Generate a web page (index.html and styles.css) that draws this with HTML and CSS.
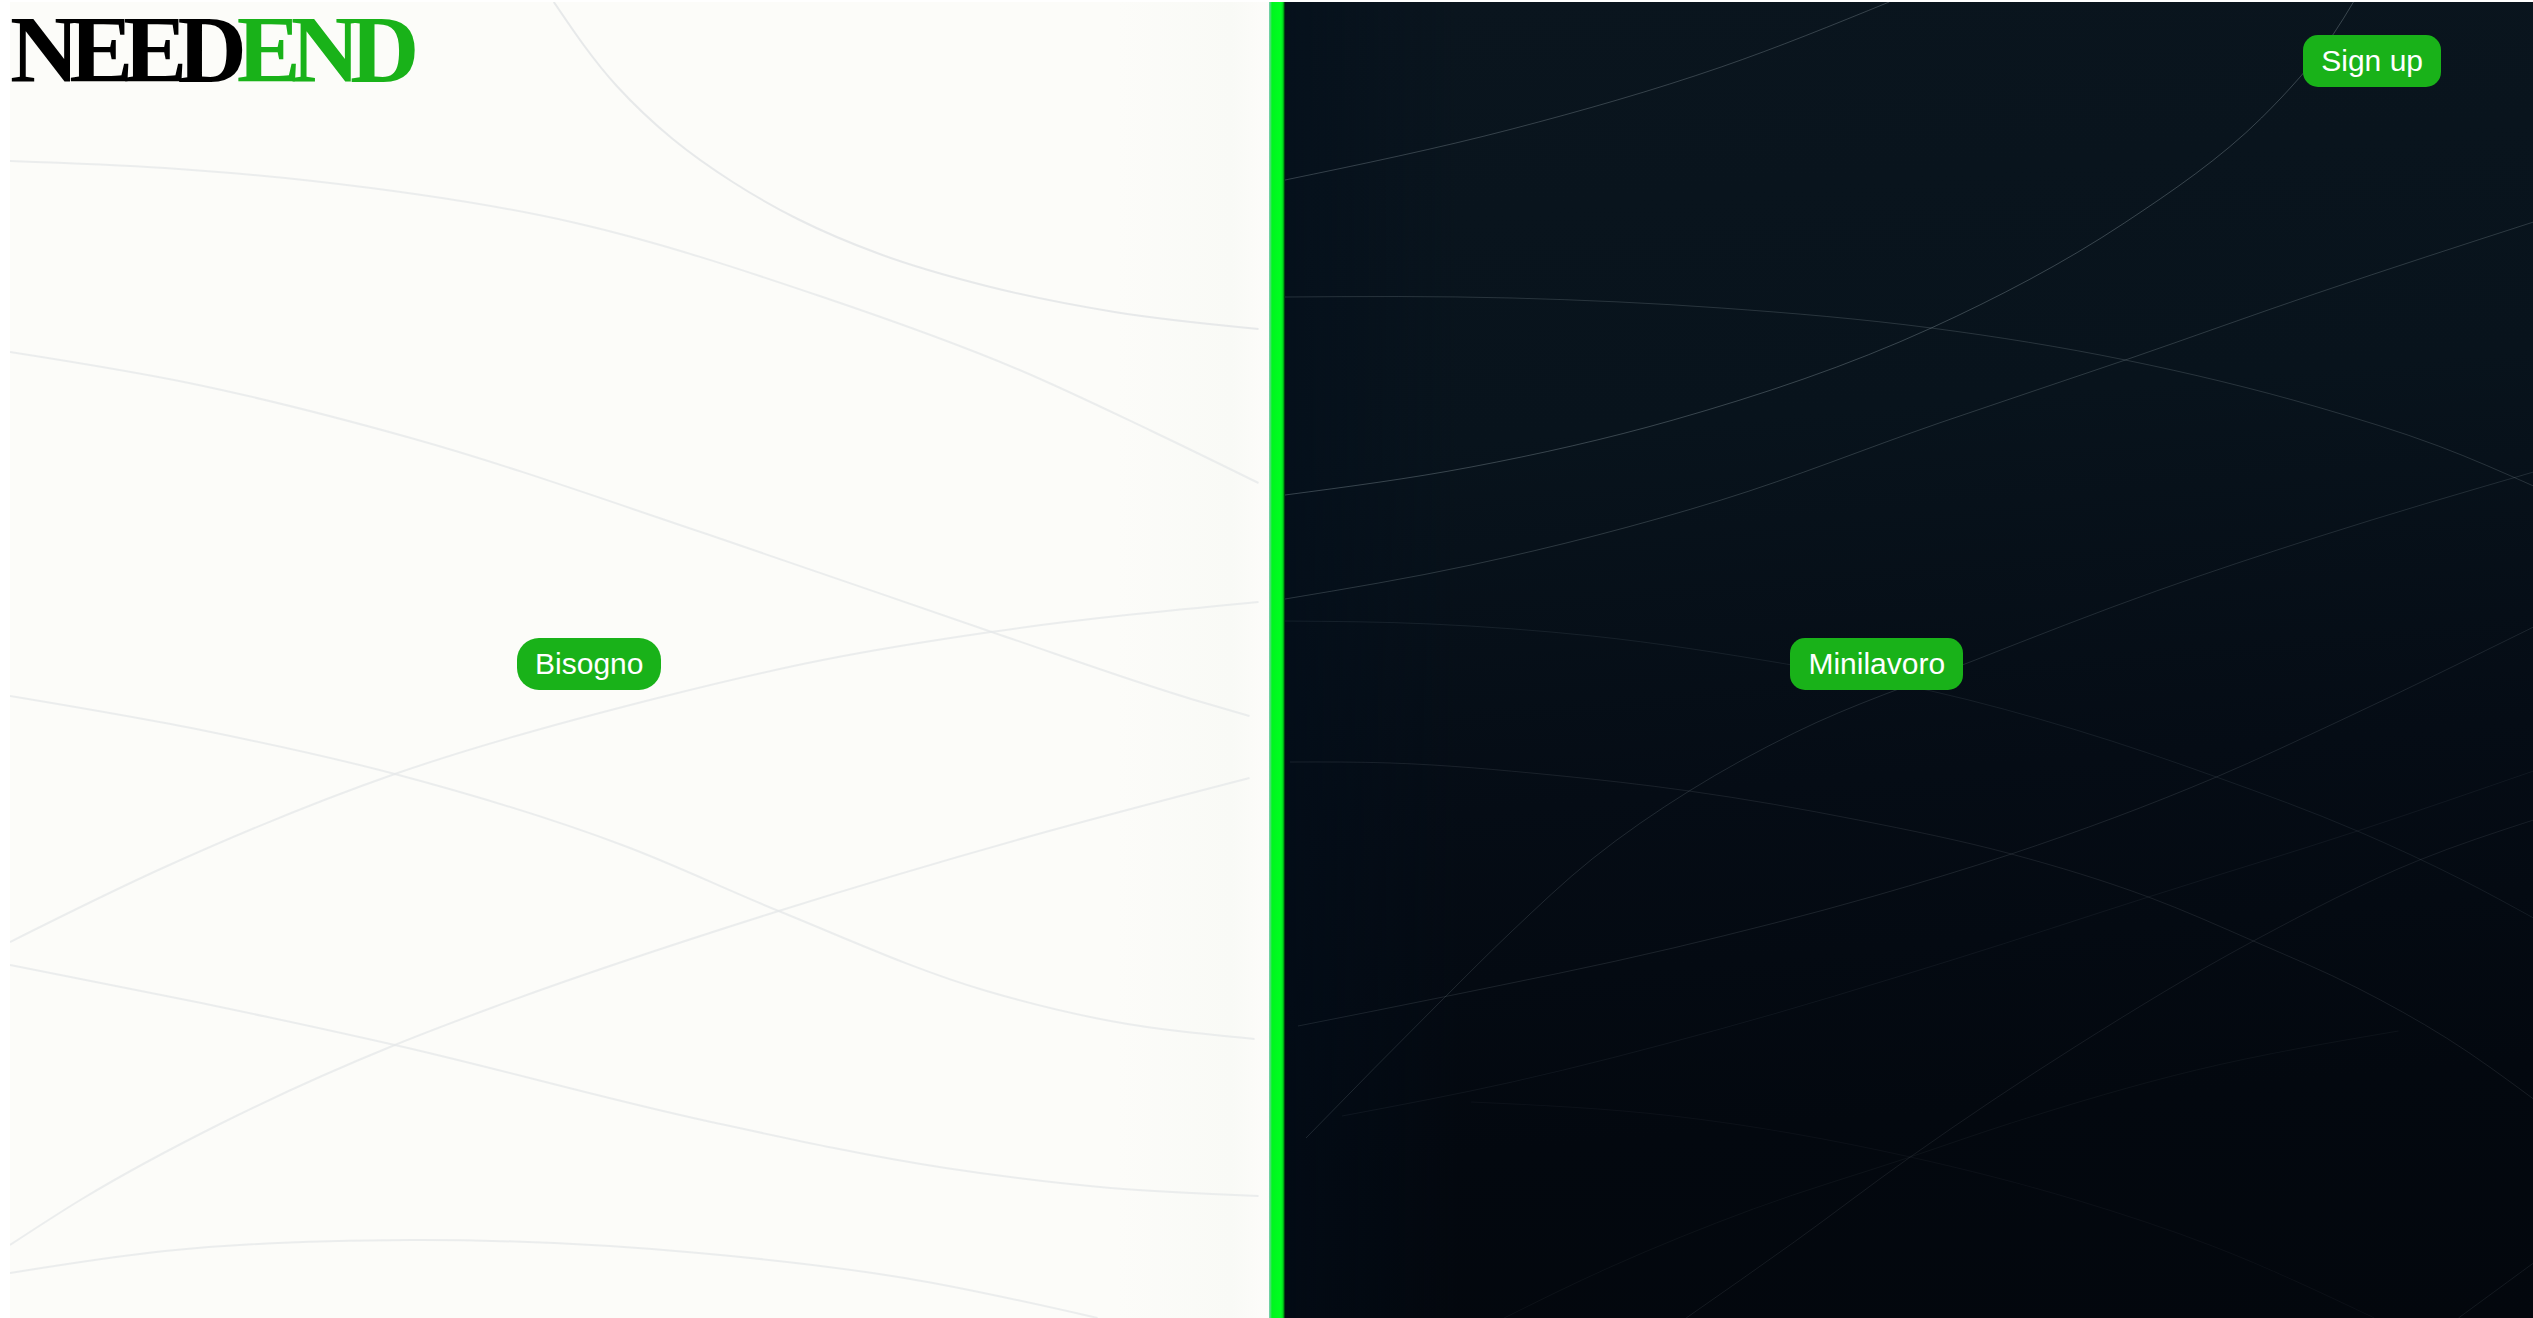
FILE: index.html
```html
<!DOCTYPE html>
<html lang="it">
<head>
<meta charset="utf-8">
<title>NEEDEND</title>
<link rel="stylesheet" href="styles.css">
</head>
<body>
<main class="split">
  <section class="panel panel-light">
    <svg class="waves" id="waves-light" viewBox="10 2 1259 1316" preserveAspectRatio="none" aria-hidden="true"></svg>
    <h1 class="logo">NEED<span class="logo-accent">END</span></h1>
    <button class="btn btn-need" type="button">Bisogno</button>
  </section>
  <div class="divider"></div>
  <section class="panel panel-dark">
    <svg class="waves" id="waves-dark" viewBox="1285 2 1248 1316" preserveAspectRatio="none" aria-hidden="true"></svg>
    <button class="btn btn-signup" type="button">Sign up</button>
    <button class="btn btn-job" type="button">Minilavoro</button>
  </section>
</main>
<script src="waves.js"></script>
</body>
</html>
```
FILE: styles.css
```css
* {
  box-sizing: border-box;
}

body {
  margin: 0;
  padding: 2px 0 0 10px;
  background: #fff;
  font-family: "Liberation Sans", Arial, sans-serif;
}

.split {
  display: grid;
  grid-template-columns: calc(50vw - 8px) 16px 1fr;
  min-height: calc(100vh - 2px);
}

.panel {
  display: grid;
  grid-template: minmax(0, 1fr) / minmax(0, 1fr);
}

/* Artwork, logo and buttons share one cell and are aligned inside it */
.panel > * {
  grid-area: 1 / 1;
}

.panel-light {
  background: linear-gradient(90deg, #fcfcf9 0%, #fcfcf9 88%, #f9faf6 97%, #fdfcfa 100%);
}

.panel-dark {
  background:
    linear-gradient(90deg, #020d1a88 0%, #020d1a00 14%),
    linear-gradient(175deg, #0a151e 0%, #08131c 32%, #050c15 58%, #03080f 82%, #03070d 100%);
}

.divider {
  background: linear-gradient(90deg, #86c9bd 0, #00f51f 3px, #00ff20 12px, #00d81b 14px, #001a08 100%);
}

.waves {
  width: 100%;
  height: 100%;
  min-height: 0;
  contain: size;
}

.waves path {
  fill: none;
  vector-effect: non-scaling-stroke;
}

#waves-light path {
  stroke: #e4e7e8;
  stroke-width: 2px;
}

#waves-dark path {
  stroke: #a9b8c0;
  stroke-width: 1px;
}

.logo {
  align-self: start;
  justify-self: start;
  margin: 0;
  font-family: "Liberation Serif", "Times New Roman", serif;
  font-size: 96px;
  font-weight: 700;
  line-height: 96px;
  letter-spacing: -10px;
  color: #000;
}

.logo-accent {
  color: #19b219;
}

.btn {
  border: 0;
  border-radius: 15px;
  padding: 9px 18px;
  background: #19b219;
  color: #fff;
  font-family: inherit;
  font-size: 30px;
  line-height: 34px;
  cursor: pointer;
}

.btn-need,
.btn-job {
  place-self: center;
  margin-top: 8px;
}

.btn-need {
  margin-right: 100px;
  border-radius: 22px;
}

.btn-job {
  margin-right: 64px;
}

.btn-signup {
  place-self: start end;
  margin: 33px 92px 0 0;
}
```
FILE: waves.js
```js
// Each wave: stroke opacity, then the points its curve runs through.
const light = [
  [.9, 554,2, 617,86, 673,139, 733,182, 798,219, 880,254, 987,286, 1115,312, 1259,329],
  [.7, 10,161, 165,168, 313,181, 576,223, 823,297, 1020,370, 1152,431, 1259,483],
  [.7, 10,352, 189,383, 411,438, 707,534, 995,633, 1195,700, 1250,716],
  [.7, 1259,602, 991,632, 823,660, 658,698, 395,774, 165,867, 10,942],
  [.7, 10,696, 206,731, 395,774, 625,846, 779,911, 987,991, 1111,1021, 1255,1039],
  [.7, 1250,778, 1028,837, 779,911, 494,1007, 395,1045, 222,1123, 82,1199, 10,1245],
  [.7, 10,965, 206,1004, 395,1045, 707,1121, 946,1168, 1111,1188, 1259,1196],
  [.7, 10,1273, 165,1251, 411,1240, 699,1253, 905,1278, 1098,1318]
];
const dark = [
  [.28, 1285,180, 1512,129, 1721,67, 1889,2],
  [.3, 2353,2, 2333,34, 2261,118, 2124,223, 1931,328, 1673,420, 1471,467, 1285,495],
  [.2, 1285,297, 1512,298, 1721,308, 1931,328, 2125,360, 2317,407, 2438,446, 2533,486],
  [.23, 1285,599, 1471,565, 1721,500, 1939,423, 2125,360, 2317,293, 2533,222],
  [.17, 2533,472, 2317,537, 2156,591, 1975,660, 1794,733, 1689,791, 1592,859, 1512,931, 1443,999, 1306,1138],
  [.1, 1285,621, 1431,624, 1592,636, 1786,664, 1931,691, 2076,730, 2216,777, 2357,831, 2462,880, 2533,918],
  [.12, 1290,762, 1391,763, 1552,775, 1689,791, 1858,820, 2011,854, 2148,897, 2253,941, 2357,988, 2446,1038, 2533,1099],
  [.14, 1298,1026, 1443,997, 1673,948, 1874,896, 2011,854, 2216,777, 2341,720, 2533,627],
  [.07, 2533,771, 2357,831, 2148,897, 1955,959, 1713,1031, 1512,1082, 1342,1116],
  [.11, 2533,820, 2419,860, 2253,941, 2076,1046, 1910,1157, 1794,1242, 1686,1318],
  [.06, 1504,1318, 1608,1268, 1753,1209, 1910,1157, 2011,1123, 2196,1070, 2398,1031],
  [.05, 1471,1102, 1673,1116, 1910,1157, 2076,1200, 2212,1246, 2374,1318],
  [.1, 2458,1318, 2533,1263]
];

// Smooth spline through the points, written as cubic segments.
// The tangent at a point weighs its two chords by the opposite chord's length;
// an end point has no neighbour, so its handle leans on the far handle.
function curve(flat) {
  const p = [];
  for (let i = 0; i < flat.length; i += 2) p.push([flat[i], flat[i + 1]]);
  const dist = (m, n) => Math.hypot(m[0] - n[0], m[1] - n[1]);
  const mid = (m, n) => [(m[0] + n[0]) / 2, (m[1] + n[1]) / 2];
  const tangent = (a, b, c) => {
    const s1 = dist(a, b), s2 = dist(b, c);
    return [0, 1].map(n =>
      ((b[n] - a[n]) / s1 * s2 + (c[n] - b[n]) / s2 * s1) / (s1 + s2));
  };
  let d = `M${p[0]}`;
  for (let i = 0; i < p.length - 1; i++) {
    const a = p[i - 1], b = p[i], c = p[i + 1], e = p[i + 2];
    const k = dist(b, c) / 3;
    let h1, h2;
    if (a) {
      const t = tangent(a, b, c);
      h1 = [b[0] + t[0] * k, b[1] + t[1] * k];
    }
    if (e) {
      const t = tangent(b, c, e);
      h2 = [c[0] - t[0] * k, c[1] - t[1] * k];
    }
    h1 = h1 || mid(b, h2 || c);
    h2 = h2 || mid(h1, c);
    d += `C${h1} ${h2} ${c}`;
  }
  return d;
}

function draw(id, waves) {
  const svg = document.getElementById(id);
  for (const [opacity, ...points] of waves) {
    const path = document.createElementNS("http://www.w3.org/2000/svg", "path");
    path.setAttribute("d", curve(points));
    path.setAttribute("stroke-opacity", opacity);
    svg.append(path);
  }
}

draw("waves-light", light);
draw("waves-dark", dark);
```
